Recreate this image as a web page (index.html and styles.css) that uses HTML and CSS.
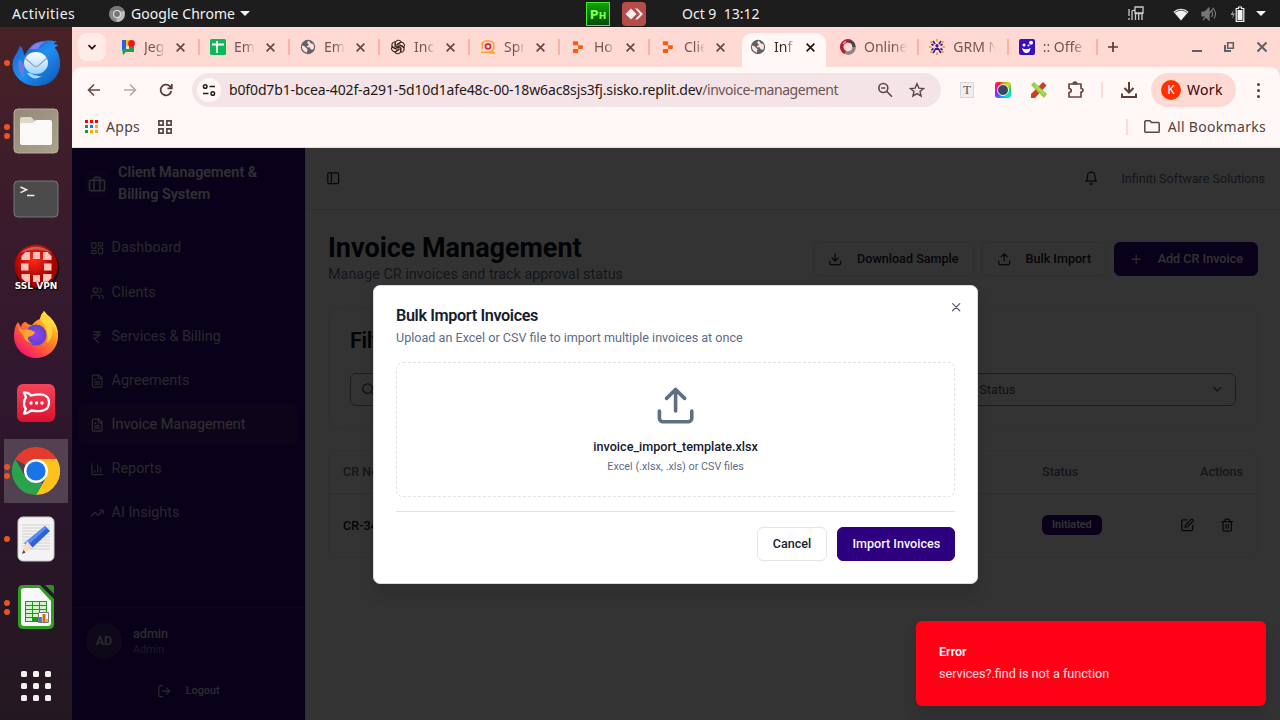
FILE: index.html
```html
<!DOCTYPE html>
<html lang="en">
<head>
<meta charset="utf-8">
<title>Invoice Management</title>
<link rel="stylesheet" href="styles.css">
</head>
<body>
<svg class="defs" width="0" height="0" aria-hidden="true">
  <defs>
    <linearGradient id="g-bird" x1="0" y1="0" x2="1" y2="1"><stop offset="0" stop-color="#1b5fd0"/><stop offset=".5" stop-color="#1f8ff0"/><stop offset="1" stop-color="#0d4fae"/></linearGradient>
    <linearGradient id="g-mail" x1="0" y1="0" x2="0" y2="1"><stop offset="0" stop-color="#fff"/><stop offset="1" stop-color="#9bd3ff"/></linearGradient>
    <linearGradient id="g-fox" x1="1" y1="0" x2=".2" y2="1"><stop offset="0" stop-color="#fff04a"/><stop offset=".4" stop-color="#ff9a1f"/><stop offset=".75" stop-color="#ff4248"/><stop offset="1" stop-color="#e8107a"/></linearGradient>
    <radialGradient id="g-fox2"><stop offset="0" stop-color="#9a3cff"/><stop offset="1" stop-color="#5b46c4"/></radialGradient>
    <radialGradient id="g-vpn" cx=".45" cy=".35"><stop offset="0" stop-color="#ff2a1a"/><stop offset="1" stop-color="#a30000"/></radialGradient>
    <linearGradient id="g-rc" x1="0" y1="0" x2="0" y2="1"><stop offset="0" stop-color="#f5445a"/><stop offset="1" stop-color="#d9122e"/></linearGradient>
    <linearGradient id="g-files" x1="0" y1="0" x2="1" y2="1"><stop offset="0" stop-color="#938a76"/><stop offset="1" stop-color="#aaa28e"/></linearGradient>
  </defs>
  <symbol id="x" viewBox="0 0 10 10"><path d="M1.500 1.500l7 7m0-7l-7 7" stroke="currentColor" stroke-width="1.500" fill="none"/></symbol>
  <symbol id="globe" viewBox="0 0 16 16"><circle cx="8" cy="8" r="7.200" fill="#5f6368"/><path d="M8.600 1.800C7.300 3 6.900 3.400 7.700 4.400 8.500 5.100 9 5 8.600 6.200 8 7.200 6.500 6.700 6.800 8.200h2.400c1.300.3 1 1.300 1.300 2 .8.4 1.900-.1 2.700.5A6 6 0 0 0 13 4.700c-1 .3-2 .2-2.600-.6-.7-.8-.2-1.300-1.800-2.300zM2 6.800c1.500-.2 2.800.4 3.600 1.600.6 1 1.800.9 1.900 2 .1 1-.9 1.600-.5 3.300A6 6 0 0 1 2 6.800z" fill="#ffe3df"/></symbol>
  <symbol id="replit" viewBox="0 0 16 16"><path d="M3.800 2.200h3.400a.9.9 0 0 1 .9.9v3.200H3.800a.9.9 0 0 1-.9-.9V3.100a.9.900 0 0 1 .9-.9zM8.100 6.300h3.900a.9.9 0 0 1 .9.9v1.800a.9.9 0 0 1-.9.9H8.100zM3.800 9.900h4.300v3.200a.9.9 0 0 1-.9.9H3.800a.9.9 0 0 1-.9-.9v-2.300a.9.9 0 0 1 .9-.9z" fill="#ff5a0a"/></symbol>
  <symbol id="file" viewBox="0 0 24 24"><path d="M15 2H6a2 2 0 0 0-2 2v16a2 2 0 0 0 2 2h12a2 2 0 0 0 2-2V7zM14 2v4a2 2 0 0 0 2 2h4M10 9H8m8 4H8m8 4H8"/></symbol>
  <symbol id="upload" viewBox="0 0 24 24"><path d="M21 15v4a2 2 0 0 1-2 2H5a2 2 0 0 1-2-2v-4M17 8l-5-5-5 5M12 3v12"/></symbol>
</svg>

<div class="desktop">
  <header class="topbar">
    <span class="activities">Activities</span>
    <svg class="tb-chrome" viewBox="0 0 16 16"><circle cx="8" cy="8" r="8" fill="#888"/><path d="M8 8L1.500 3.800A8 8 0 0 1 15 4.500H8z" fill="#777"/><path d="M8 8l7-3.500A8 8 0 0 1 7.500 16z" fill="#bbb"/><circle cx="8" cy="8" r="4" fill="#e0e0e0"/><circle cx="8" cy="8" r="2.900" fill="#777"/></svg>
    <span class="appname">Google Chrome</span>
    <i class="caret"></i>
    <span class="ph">P<small>H</small></span>
    <svg class="anydesk" viewBox="0 0 24 24"><rect width="24" height="24" rx="4" fill="#b44d49"/><path d="M9 6.500l5.500 5.500L9 17.500 3.500 12zM13 6.500h2.500L21 12l-5.500 5.500H13L18 12z" fill="#eee"/></svg>
    <span class="clock">Oct 9&nbsp; 13:12</span>
    <svg class="net" viewBox="0 0 18 16" fill="none" stroke="#cfcbc5" stroke-width="1.300"><path d="M2 3v7m0 2v2M5 14V5.500Q5 4 7.500 4.500M8 1h8v6H8zM8.500 14V7.500H16M11.700 8v6m3.300-6v6"/></svg>
    <svg class="wifi" viewBox="0 0 16 14"><path d="M8 13.500L.5 4.800a11 11 0 0 1 15 0z" fill="#f2f2f2"/><path d="M2 5.500Q8 .8 14 5.500" fill="none" stroke="#1d1d1d" stroke-width=".7"/></svg>
    <svg class="sound" viewBox="0 0 16 14" fill="none" stroke="#777" stroke-width="1.200"><path d="M1 5h3l4-4v12L4 9H1z" fill="#777"/><path d="M2 13L13 1M10.500 4q2 3 0 6M13 2.500q3 4.500 0 9"/></svg>
    <svg class="battery" viewBox="0 0 15 16"><path d="M3.500 4L.5 9H3l-1 4L5 7.500H2.800z" fill="#999"/><path d="M8.500 1h3v1.500h2.300v12.800H6.200V2.500h2.300z" fill="none" stroke="#f2f2f2" stroke-width="1.200"/><path d="M7.500 4h5v10h-5z" fill="#f2f2f2"/></svg>
    <i class="caret"></i>
  </header>

  <div class="screen">
    <nav class="dock">
      <div class="app one"><svg viewBox="0 0 48 48"><path d="M1 22C2 17 5 15 8 7c2 1 4 5 4 10C16 12 18 5 27 3c7-2 14-2 18 0-2 0-3 1-3 2 3 0 4 1 4 2-2 0-3 1-3 2 3 3 5 9 5 16 0 13-10 22-24 22S-2 35 1 22z" fill="url(#g-bird)"/><path d="M17 14C17 4 28 1 38 3c-6 1-7 5-11 6z" fill="#2274dc"/><path d="M18 10q5-8 15-7-5 2-7 7z" fill="#8a7bea"/><path d="M7 20q-3 11 5 19-1-7 1-13z" fill="#6d78dc"/><ellipse cx="24" cy="24" rx="12" ry="11" fill="url(#g-mail)"/><path d="M13 19l9 8q2 1 4 0l9-8" fill="none" stroke="#93a8ba" stroke-width="1.300"/><path d="M18 34q6 4 12 3-9 6-15-3z" fill="#a9d7ff"/></svg></div>
      <div class="app two"><svg viewBox="0 0 48 48"><rect x="2" y="2" width="44" height="44" rx="4" fill="url(#g-files)" stroke="#b7b09d"/><path d="M8 12q0-2 2-2h9l4 4h14v8H8z" fill="#ddd8c8"/><path d="M8 17q0-1 2-1h11l3-3h14q2 0 2 2v21q0 2-2 2H10q-2 0-2-2z" fill="#faf9f7"/></svg></div>
      <div class="app"><svg viewBox="0 0 48 48"><rect x="2" y="6" width="44" height="36" rx="4" fill="#4b4b4b" stroke="#777"/><path d="M8.500 12l6 2.800-6 2.800M15 20.500h7.500" fill="none" stroke="#eee" stroke-width="1.600"/></svg></div>
      <div class="app vpn"><svg viewBox="0 0 48 48"><circle cx="25" cy="25" r="22" fill="#180408"/><circle cx="24" cy="23" r="21.500" fill="url(#g-vpn)"/><path d="M8 10Q24-3 40 10 24 3 8 10z" fill="#c65b58"/><path d="M9.500 17v-4l4-4h4.500v8zM21 9h7v7h-7zM31 9h4.500l4 4v4H31zM9 20.500h7.500v7H9zM32 20.500h7.500v7H32zM9.500 31H18v8h-4.500l-4-4zM21 32h7v7h-7zM31 31h8.500v4l-4 4H31z" fill="#ffc3bb"/></svg><b>SSL VPN</b></div>
      <div class="app fox"><svg viewBox="0 0 48 48"><path d="M6 12l3 5q1-5 5-5 2 3 6 3 4-5 8-6 1-5 4-8 3 4 6 6 8 8 8 19c0 13-10 22-22 22S2 38 2 26q0-9 4-14z" fill="url(#g-fox)"/><circle cx="24" cy="25" r="10.500" fill="url(#g-fox2)"/><path d="M6 12q0 7 5 8 6-2 12 2-1 4-7 5-1 5 6 7-9-1-11-9-5-4-5-13z" fill="#ffa32c"/><path d="M28 9q1-5 4-8 3 4 6 6 8 8 8 19-1-7-6-10 2 12-5 17 3-13-7-24z" fill="#ffe243" opacity=".7"/></svg></div>
      <div class="app"><svg viewBox="0 0 48 48"><rect x="5" y="5" width="38" height="38" rx="6" fill="url(#g-rc)"/><path d="M12 13.500q5 0 7 3 18-4 18 7t-18 8q-3 3-7 3l2-5q-2-1-2-5t2-6z" fill="none" stroke="#fff" stroke-width="2.300" stroke-linejoin="round"/><g fill="#fff"><circle cx="19" cy="24" r="1.700"/><circle cx="24.500" cy="24" r="1.700"/><circle cx="30" cy="24" r="1.700"/></g></svg></div>
      <div class="app two current"><svg viewBox="0 0 48 48"><path d="M24 24L3.200 12A24 24 0 0 1 44.800 12z" fill="#e33b2e"/><path d="M24 12h20.800A24 24 0 0 1 24 48l10.400-18z" fill="#fcc31e"/><path d="M3.200 12l10.400 18q4 5 10.400 6h7L24 48A24 24 0 0 1 3.200 12z" fill="#2ba24c"/><circle cx="24" cy="24" r="12" fill="#fff"/><circle cx="24" cy="24" r="9.600" fill="#1a73e8"/></svg></div>
      <div class="app one"><svg viewBox="0 0 48 48"><rect x="6" y="2" width="36" height="44" rx="5" fill="#f3f3f3" stroke="#cacaca"/><path d="M10 10h28M10 13h28M10 16h28M10 19h28M10 22h28M10 25h28M10 28h28M10 31h28M10 34h28" stroke="#d0d0d0"/><path d="M33 11l5 5-19 18-6-6z" fill="#2e63d8"/><path d="M33 11l2 2-20 18-3-3z" fill="#5b8bf0"/><path d="M15 26l6 7-11 6z" fill="#fbdcc0"/><path d="M11.500 35l2 2.500L10 39z" fill="#444"/></svg></div>
      <div class="app two"><svg viewBox="0 0 48 48"><path d="M11 2h17l14 14v25q0 5-5 5H11q-5 0-5-5V7q0-5 5-5z" fill="#2f9e22"/><path d="M12 5h15l12 13v22q0 3-3 3H12q-3 0-3-3V8q0-3 3-3z" fill="#f8f8f8"/><path d="M33 2h7q2 0 2 2v7z" fill="#2c8f1e"/><path d="M13 18h22v21H13z" fill="#23951a"/><path d="M14 19h6v3h-6zm7 0h6v3h-6zm7 0h6v3h-6zM14 23h6v3h-6zm7 0h6v3h-6zm7 0h6v3h-6zM14 27h6v3h-6zm7 0h6v3h-6zm7 0h6v3h-6zM14 31h6v3h-6zm7 0h6v3h-6zM14 35h6v3h-6z" fill="#d2f3cb"/><path d="M26.500 29.500h10v10h-10z" fill="#fff" stroke="#777"/><path d="M27 34h3v5h-3z" fill="#2a90c8"/><path d="M30.500 31h3v8h-3z" fill="#dc6414"/><path d="M34 36h2v3h-2z" fill="#f0b020"/></svg></div>
      <div class="launcher"><i></i><i></i><i></i><i></i><i></i><i></i><i></i><i></i><i></i></div>
    </nav>

    <main class="browser">
      <div class="tabs">
        <span class="tabsearch"><svg viewBox="0 0 10 10"><path d="M1.500 3.200L5 6.700l3.500-3.500" fill="none" stroke="#2b1512" stroke-width="1.700"/></svg></span>
        <div class="tab"><svg class="fav" viewBox="0 0 16 16"><path d="M2 1h4v10H2z" fill="#2164e8"/><path d="M6 1h3v6H6z" fill="#fbbc04"/><path d="M2 10h12v3H6l-3 3z" fill="#14a750"/><path d="M9 6h5v5H9z" fill="#14a750"/><circle cx="11.500" cy="4.500" r="3.400" fill="#f01414"/></svg><span class="t">Jeg</span><svg class="cl"><use href="#x"/></svg></div>
        <div class="tab"><svg class="fav" viewBox="0 0 16 16"><rect width="16" height="16" rx="1.500" fill="#0cb858"/><path d="M2 5.500h12M7 2v12" stroke="#fff" stroke-width="1.800"/></svg><span class="t">Em</span><svg class="cl"><use href="#x"/></svg></div>
        <div class="tab"><svg class="fav"><use href="#globe"/></svg><span class="t">Em</span><svg class="cl"><use href="#x"/></svg></div>
        <div class="tab"><svg class="fav" viewBox="0 0 16 16" fill="none" stroke="#3a2422" stroke-width="1.100"><g id="petal"><path d="M5.200 8.200V4.300a3.200 3.200 0 0 1 6-1.400L8 4.800v3.600"/></g><use href="#petal" transform="rotate(60 8 8)"/><use href="#petal" transform="rotate(120 8 8)"/><use href="#petal" transform="rotate(180 8 8)"/><use href="#petal" transform="rotate(240 8 8)"/><use href="#petal" transform="rotate(300 8 8)"/></svg><span class="t">Inc</span><svg class="cl"><use href="#x"/></svg></div>
        <div class="tab"><svg class="fav" viewBox="0 0 16 16" fill="none"><path d="M1.500 6q1-4 6-4.300 6.500 0 6.500 5.500t-6 6H1M2.500 10q-1-3 1-5M11 12.500l4 1.500H9" stroke="#f8a62e" stroke-width="1.600"/><circle cx="8" cy="7.300" r="2.500" fill="#fff" stroke="#e02440" stroke-width="1.800"/></svg><span class="t">Spr</span><svg class="cl"><use href="#x"/></svg></div>
        <div class="tab"><svg class="fav"><use href="#replit"/></svg><span class="t">Ho</span><svg class="cl"><use href="#x"/></svg></div>
        <div class="tab last"><svg class="fav"><use href="#replit"/></svg><span class="t">Clie</span><svg class="cl"><use href="#x"/></svg></div>
        <div class="tab active"><svg class="fav"><use href="#globe"/></svg><span class="t">Inf</span><svg class="cl"><use href="#x"/></svg></div>
        <div class="tab wide"><svg class="fav" viewBox="0 0 16 16" fill="none" stroke-width="3.500"><path d="M10 2.300A6 6 0 0 0 5.500 13.500" stroke="#b0203a"/><path d="M5.500 13.500A6 6 0 0 0 14 7.500" stroke="#888"/><path d="M14 8A6 6 0 0 0 9 2" stroke="#4b4648"/><path d="M3 5q1-2 3-2.500" stroke="#ef8f9a" stroke-width="1.500"/></svg><span class="t">Online</span></div>
        <div class="tab wide"><svg class="fav" viewBox="0 0 16 16"><path d="M4 2l2 3M12 2l-2 3M4 14l2-3M12 14l-2-3M2.500 5l2 1.500M13.500 5l-2 1.500M2.500 11l2-1.500M13.500 11l-2-1.500" stroke="#3a1d8c" stroke-width="1.600"/><path d="M8 0v2.500M8 13.500V16M0 8h2.500M13.500 8H16M1.500 2.500l1.500 1M14.500 2.500l-1.500 1M1.500 13.500l1.500-1M14.500 13.500l-1.500-1" stroke="#f6941e" stroke-width="1.600"/><circle cx="8" cy="6.700" r="1.600" fill="#3a1d8c"/><path d="M5.300 11q0-2.500 2.700-2.500t2.700 2.500z" fill="#3a1d8c"/></svg><span class="t">GRM N</span></div>
        <div class="tab wide"><svg class="fav" viewBox="0 0 16 16"><rect width="16" height="16" rx="2" fill="#3a0fc0"/><circle cx="5" cy="6" r="1.500" fill="#fff"/><circle cx="12" cy="3.700" r="2" fill="#fff"/><circle cx="9.500" cy="6.500" r="1" fill="#fff"/><path d="M3 9q4 2.500 8.500 0-.5 5-4 5T3 9z" fill="#fff"/></svg><span class="t">:: Offe</span></div>
        <svg class="plus" viewBox="0 0 12 12"><path d="M6 1v10M1 6h10" stroke="#5a3733" stroke-width="1.700"/></svg>
        <span class="winctl">
          <svg viewBox="0 0 12 12"><path d="M1 10h10" stroke="#5d6166" stroke-width="2"/></svg>
          <svg viewBox="0 0 12 12" fill="none" stroke="#5d6166"><path d="M4.700 1.700h5.600v5.600H4.700z" stroke-width="1.600"/><path d="M2 4v6h6" stroke-width="2"/></svg>
          <svg viewBox="0 0 12 12"><path d="M1.500 1.500l9 9m0-9l-9 9" stroke="#5d6166" stroke-width="2"/></svg>
        </span>
      </div>

      <div class="toolbar">
        <span class="slot"><svg class="i16" viewBox="0 0 16 16" fill="none" stroke="#6b4540" stroke-width="1.600"><path d="M14 8H3M8 2.500L2.500 8 8 13.500"/></svg></span>
        <span class="slot"><svg class="i16" viewBox="0 0 16 16" fill="none" stroke="#baa6a3" stroke-width="1.600"><path d="M2 8h11M8 2.500L13.500 8 8 13.500"/></svg></span>
        <span class="slot"><svg class="i16" viewBox="0 0 16 16" fill="none" stroke="#5e3c38" stroke-width="1.800"><path d="M13.300 9a5.400 5.400 0 1 1-1.500-4.900L13.500 6M13.800 2v4.300H9.500"/></svg></span>
        <div class="omnibox">
          <span class="site"><svg class="i16" viewBox="0 0 16 16" fill="none" stroke="#2b1a18" stroke-width="1.500"><circle cx="4.200" cy="4.500" r="1.800"/><path d="M8.500 4.500H14M2 11.500h5.500"/><circle cx="11.800" cy="11.500" r="1.800"/></svg></span>
          <span class="url">b0f0d7b1-bcea-402f-a291-5d10d1afe48c-00-18w6ac8sjs3fj.sisko.replit.dev<em>/invoice-management</em></span>
          <svg class="i16 lens" viewBox="0 0 16 16" fill="none" stroke="#574643" stroke-width="1.600"><circle cx="6.300" cy="6" r="4.500"/><path d="M4.300 6h4M9.600 9.300L15 14.700"/></svg>
          <svg class="i16 star" viewBox="0 0 16 16" fill="none" stroke="#574643" stroke-width="1.400"><path d="M8 1.800l1.900 4.300 4.600.4-3.500 3 1.100 4.500L8 11.600 3.900 14l1.100-4.500-3.500-3 4.600-.4z"/></svg>
        </div>
        <span class="slot"><span class="ext-t">T</span></span>
        <span class="slot"><span class="ext-c"><i></i></span></span>
        <span class="slot"><svg class="i16" viewBox="0 0 16 16"><path d="M12 0l3.500 3.500L4 16H0v-4z" fill="#d33c22"/><path d="M3 0l13 12-3 4L0 3z" fill="#94cf46"/><path d="M4 3.500l9 8.500" stroke="#c8f07c"/></svg></span>
        <span class="slot"><svg class="i18" viewBox="0 0 18 18" fill="none" stroke="#6b4540" stroke-width="1.700" stroke-linejoin="round"><path d="M3 3h12v4.500q2 .2 2 1.800t-2 1.800V16H3v-4.500q2.300-.3 2.300-2T3 7.500z"/><path d="M7.300 2.700q0-1.700 1.700-1.700t1.700 1.700z" fill="#6b4540"/></svg></span>
        <span class="vsep"></span>
        <span class="slot"><svg class="i18" viewBox="0 0 18 18" fill="none" stroke="#5e3c38" stroke-width="2"><path d="M9 1v10M4.500 7L9 11.500 13.500 7M2 12.500V16h14v-3.500"/></svg></span>
        <span class="profile"><b>K</b>Work</span>
        <span class="slot dots"><i></i><i></i><i></i></span>
      </div>

      <div class="bookmarks">
        <span class="gapps"><i class="r"></i><i class="r"></i><i class="r"></i><i class="g"></i><i class="b"></i><i class="y"></i><i class="g"></i><i class="y"></i><i class="y"></i></span>
        <span class="bmtext">Apps</span>
        <svg class="grid4" viewBox="0 0 14 14" fill="none" stroke="#574643" stroke-width="1.700"><path d="M.9.9h4.200v4.200H.9zM8.900.9h4.200v4.200H8.900zM.9 8.900h4.200v4.200H.9zM8.900 8.900h4.200v4.200H8.900z"/></svg>
        <span class="vsep bm"></span>
        <svg class="folder" viewBox="0 0 16 13" fill="none" stroke="#574643" stroke-width="1.500"><path d="M2 .8h4L7.500 2.500h6.800q.9 0 .9.900v8q0 .8-.9.800H1.700q-.9 0-.9-.8V1.700q0-.9 1.200-.9z"/></svg>
        <span class="bmtext">All Bookmarks</span>
      </div>

      <div class="page">
        <aside class="sidebar">
          <div class="brand">
            <span class="brandicon"><svg class="lu i18" viewBox="0 0 24 24"><path d="M8 7V5a2 2 0 0 1 2-2h4a2 2 0 0 1 2 2v2M4 7h16a2 2 0 0 1 2 2v10a2 2 0 0 1-2 2H4a2 2 0 0 1-2-2V9a2 2 0 0 1 2-2zM8 7v14M16 7v14"/></svg></span>
            <h2>Client Management &amp; Billing System</h2>
          </div>
          <div class="menu">
            <a class="first"><svg class="lu" viewBox="0 0 24 24"><rect width="7" height="9" x="3" y="3" rx="1"/><rect width="7" height="5" x="14" y="3" rx="1"/><rect width="7" height="9" x="14" y="12" rx="1"/><rect width="7" height="5" x="3" y="16" rx="1"/></svg>Dashboard</a>
            <a><svg class="lu" viewBox="0 0 24 24"><path d="M16 21v-2a4 4 0 0 0-4-4H6a4 4 0 0 0-4 4v2"/><circle cx="9" cy="7" r="4"/><path d="M22 21v-2a4 4 0 0 0-3-3.870M16 3.130a4 4 0 0 1 0 7.750"/></svg>Clients</a>
            <a><svg class="lu" viewBox="0 0 24 24"><path d="M6 3h12M6 8h12M6 13l8.500 8M6 13h3c6.667 0 6.667-10 0-10"/></svg>Services &amp; Billing</a>
            <a><svg class="lu"><use href="#file"/></svg>Agreements</a>
            <a class="on"><svg class="lu"><use href="#file"/></svg>Invoice Management</a>
            <a><svg class="lu" viewBox="0 0 24 24"><path d="M3 3v16a2 2 0 0 0 2 2h16M18 17V9M13 17V5M8 17v-3"/></svg>Reports</a>
            <a><svg class="lu" viewBox="0 0 24 24"><path d="M22 7l-8.500 8.500-5-5L2 17M16 7h6v6"/></svg>AI Insights</a>
          </div>
          <div class="user">
            <div class="who"><span class="avatar">AD</span><div><b>admin</b><small>Admin</small></div></div>
            <div class="logout"><svg class="lu" viewBox="0 0 24 24"><path d="M9 21H5a2 2 0 0 1-2-2V5a2 2 0 0 1 2-2h4M16 17l5-5-5-5M21 12H9"/></svg>Logout</div>
          </div>
        </aside>

        <section class="content">
          <div class="apphead">
            <svg class="lu" viewBox="0 0 24 24"><rect width="18" height="18" x="3" y="3" rx="2"/><path d="M9 3v18"/></svg>
            <svg class="lu bell" viewBox="0 0 24 24"><path d="M6 8a6 6 0 0 1 12 0c0 7 3 9 3 9H3s3-2 3-9M10.300 21a1.940 1.940 0 0 0 3.400 0"/></svg>
            <span>Infiniti Software Solutions</span>
          </div>
          <div class="body">
            <div class="titlerow">
              <div class="titles"><h1>Invoice Management</h1><p>Manage CR invoices and track approval status</p></div>
              <div class="btns">
                <span class="btn"><svg class="lu" viewBox="0 0 24 24"><path d="M21 15v4a2 2 0 0 1-2 2H5a2 2 0 0 1-2-2v-4M7 10l5 5 5-5M12 15V3"/></svg>Download Sample</span>
                <span class="btn"><svg class="lu"><use href="#upload"/></svg>Bulk Import</span>
                <span class="btn primary"><svg class="lu" viewBox="0 0 24 24"><path d="M5 12h14M12 5v14"/></svg>Add CR Invoice</span>
              </div>
            </div>
            <div class="card filters">
              <h3>Filters</h3>
              <div class="fields">
                <div class="field"><svg class="lu" viewBox="0 0 24 24"><circle cx="11" cy="11" r="8"/><path d="M21 21l-4.300-4.300"/></svg></div>
                <div class="field select"><span>All Status</span><svg class="lu" viewBox="0 0 24 24"><path d="M6 9l6 6 6-6"/></svg></div>
              </div>
            </div>
            <div class="card table">
              <div class="tr th"><span>CR No.</span><span>Date</span><span>Status</span><span class="act">Actions</span></div>
              <div class="tr"><b>CR-344</b><span>Oct 9, 2025</span><span><em class="badge">Initiated</em></span>
                <span class="act icons"><svg class="lu" viewBox="0 0 24 24"><path d="M12 3H5a2 2 0 0 0-2 2v14a2 2 0 0 0 2 2h14a2 2 0 0 0 2-2v-7"/><path d="M18.400 2.600a2.100 2.100 0 0 1 3 3l-9 9-4 1 1-4z"/></svg><svg class="lu" viewBox="0 0 24 24"><path d="M3 6h18M19 6v14a2 2 0 0 1-2 2H7a2 2 0 0 1-2-2V6M8 6V4a2 2 0 0 1 2-2h4a2 2 0 0 1 2 2v2M10 11v6M14 11v6"/></svg></span></div>
            </div>
          </div>
        </section>

        <div class="overlay"></div>

        <div class="dialog">
          <svg class="lu close" viewBox="0 0 24 24"><path d="M18 6L6 18M6 6l12 12"/></svg>
          <h2>Bulk Import Invoices</h2>
          <p>Upload an Excel or CSV file to import multiple invoices at once</p>
          <div class="drop">
            <svg class="lu"><use href="#upload"/></svg>
            <b>invoice_import_template.xlsx</b>
            <small>Excel (.xlsx, .xls) or CSV files</small>
          </div>
          <div class="foot"><span class="btn">Cancel</span><span class="btn primary">Import Invoices</span></div>
        </div>

        <div class="toast"><b>Error</b><span>services?.find is not a function</span></div>
      </div>
    </main>
  </div>
</div>
</body>
</html>
```

FILE: styles.css
```css
* { box-sizing: border-box; }
body { margin: 0; width: 1280px; height: 720px; overflow: hidden; font-family: Roboto, sans-serif; }
h1, h2, h3, p { margin: 0; }
svg { display: block; flex: none; }
.defs { position: absolute; }
.desktop { width: 1280px; height: 720px; display: flex; flex-direction: column; }
.i16 { width: 16px; height: 16px; }
.i18 { width: 18px; height: 18px; }

/* system bar */
.topbar { height: 27px; flex: none; background: #1d1d1d; color: #f2f2f2; display: flex; align-items: center; padding-left: 12px; font: 14px/27px "Noto Sans", sans-serif; white-space: nowrap; }
.activities { width: 97px; letter-spacing: .5px; }
.tb-chrome { width: 16px; height: 16px; margin-right: 6px; }
.appname { width: 109px; letter-spacing: .05px; }
.caret { border: 5px solid transparent; border-top-color: #f2f2f2; border-bottom: 0; }
.ph { margin-left: 336px; width: 24px; height: 24px; border: 1px solid #3ef024; background: linear-gradient(#14a010, #064a04); color: #7dff4c; font: bold 12px/24px "DejaVu Sans", sans-serif; text-align: center; }
.ph small { font-size: 9px; }
.anydesk { width: 24px; height: 24px; margin-left: 12px; }
.clock { margin-left: 36px; width: 445px; }
.net { width: 18px; height: 16px; margin-right: 28px; }
.wifi { width: 16px; height: 14px; margin-right: 12px; }
.sound { width: 16px; height: 14px; margin-right: 13px; }
.battery { width: 15px; height: 16px; margin-right: 11px; }

.screen { flex: 1; display: flex; min-height: 0; }

/* dock */
.dock { width: 72px; flex: none; padding-top: 2px; background: linear-gradient(#482226, #3d1c2b 22%, #32182e 48%, #2a152a 70%, #241820); }
.app { position: relative; height: 68px; display: flex; align-items: center; justify-content: center; }
.app > svg { width: 48px; height: 48px; }
.fox { padding-bottom: 3px; }
.app.one::before, .app.two::before { content: ""; position: absolute; left: 4px; top: 31px; width: 6px; height: 6px; border-radius: 50%; background: #e95420; }
.app.two::before { top: 27px; box-shadow: 0 9px 0 #e95420; }
.current { background: linear-gradient(#514151, #514151) center / 64px 64px no-repeat; }
.vpn b { position: absolute; left: 0; right: 0; top: 48px; text-align: center; color: #fff; font: bold 9px/10px "DejaVu Sans", sans-serif; text-shadow: 0 0 2px #000, 1px 1px 1px #000; }
.launcher { width: 30px; margin: 30px auto 0 21px; display: grid; grid-template-columns: repeat(3, 6px); gap: 6px; }
.launcher i { width: 6px; height: 6px; border-radius: 1.500px; background: #f2f0ee; }

/* browser chrome */
.browser { flex: 1; min-width: 0; display: flex; flex-direction: column; background: #ffd9d3; font-family: "Noto Sans", sans-serif; font-size: 14px; color: #534341; }
.tabs { height: 40px; flex: none; display: flex; align-items: center; padding-left: 6px; }
.tabsearch { width: 28px; height: 28px; border-radius: 9px; background: #ffece9; margin-right: 4px; display: flex; align-items: center; justify-content: center; }
.tabsearch svg { width: 10px; height: 10px; }
.tab { position: relative; width: 90px; height: 40px; flex: none; display: flex; align-items: center; padding-left: 10px; color: #7a5550; }
.tab::after { content: ""; position: absolute; right: 0; top: 12px; width: 2px; height: 16px; background: #ffb0a5; }
.tab.last::after, .tab.active::after { display: none; }
.fav { width: 16px; height: 16px; margin-right: 8px; }
.t { width: 21px; overflow: hidden; white-space: nowrap; line-height: 20px; margin-top: -1px; -webkit-mask: linear-gradient(90deg, #000 55%, transparent); }
.cl { width: 11px; height: 11px; margin-left: 9.500px; color: #6b4540; }
.tab.active { color: #3a2825; }
.tab.active::before { content: ""; position: absolute; z-index: 0; left: 2px; top: 6px; width: 84px; height: 34px; border-radius: 10px 10px 0 0; background: #fff8f6; }
.tab.active > * { position: relative; }
.tab.active .cl { color: #241210; }
.tab.wide { width: 89.330px; }
.wide .t { width: 43px; -webkit-mask: linear-gradient(90deg, #000 70%, transparent); }
.plus { width: 12px; height: 12px; margin-left: 9px; }
.winctl { display: flex; gap: 20.500px; margin-left: 72px; }
.winctl svg { width: 12px; height: 12px; }
.toolbar { height: 46px; flex: none; display: flex; align-items: center; padding-left: 4px; background: #fff8f6; border-radius: 10px 10px 0 0; }
.slot { width: 36px; flex: none; display: flex; align-items: center; justify-content: center; }
.omnibox { width: 749px; height: 34px; margin: 0 8px; border-radius: 17px; background: #f4e4e7; display: flex; align-items: center; padding-left: 5px; }
.site { width: 24px; height: 24px; border-radius: 50%; background: #fff8f6; display: flex; align-items: center; justify-content: center; }
.url { margin: -2px 0 0 8px; width: 648px; white-space: nowrap; color: #231918; font-size: 14px; letter-spacing: -.14px; }
.url em { font-style: normal; color: #6d5552; letter-spacing: -.45px; }
.star { margin-left: 16px; }
.ext-t { width: 14px; height: 16px; background: #efefef; border: 1px solid #d8d8d8; color: #555; font: 13px/14px "Liberation Serif", serif; text-align: center; }
.ext-c { width: 16px; height: 16px; border-radius: 3px; background: conic-gradient(#f28c00, #c8e020 12%, #18d070 25%, #00e8d0 38%, #00b8ff 50%, #8030ff 65%, #ff00b0 80%, #ff2020 92%, #f28c00); display: flex; align-items: center; justify-content: center; }
.ext-c i { width: 12px; height: 12px; border-radius: 50%; background: #34495e; border: 1.500px solid #fff; }
.vsep { width: 2px; height: 16px; margin: 0 8px; background: #ffd9d3; }
.profile { width: 85px; height: 34px; margin: 0 4px; border-radius: 17px; background: #ffd9d3; color: #410002; display: flex; align-items: center; padding-left: 10px; gap: 6px; letter-spacing: .3px; line-height: 32px; }
.profile b { width: 20px; height: 20px; border-radius: 50%; background: #ff3100; color: #fff; font: 12px/20px "Noto Sans", sans-serif; text-align: center; }
.dots { flex-direction: column; gap: 3px; }
.dots i { width: 3px; height: 3px; border-radius: 50%; background: #5e3c38; }
.bookmarks { height: 35px; flex: none; display: flex; align-items: center; padding: 0 14px 7px 13px; background: #fff8f6; border-bottom: 1px solid #f3dcd8; white-space: nowrap; }
.bmtext { letter-spacing: .3px; }
.gapps { display: grid; grid-template-columns: repeat(3, 3px); gap: 2px; margin-right: 8px; }
.gapps i { width: 3px; height: 3px; }
.r { background: #f00; } .g { background: #00a050; } .b { background: #1a73e8; } .y { background: #fa0; }
.grid4 { width: 14px; height: 14px; margin-left: 17.500px; }
.vsep.bm { margin: 0 16px 0 auto; }
.folder { width: 16px; height: 13px; margin-right: 8px; }

/* app */
.page { position: relative; flex: 1; min-height: 0; display: flex; background: #fff; font-family: Roboto, sans-serif; font-size: 12.600px; color: #1a2333; overflow: hidden; }
.lu { width: 14.400px; height: 14.400px; fill: none; stroke: currentColor; stroke-width: 2; stroke-linecap: round; stroke-linejoin: round; }
.sidebar { width: 233px; flex: none; background: #2d0080; color: #dcdce0; display: flex; flex-direction: column; }
.brand { height: 73px; display: flex; align-items: flex-start; padding: 14px 14px 0; border-bottom: 1px solid #36108a; }
.brandicon { width: 21px; height: 28px; margin: 8px 11px 0 0; border-radius: 7px; background: #3d1484; display: flex; align-items: center; justify-content: center; }
.brandicon .lu { width: 18px; height: 18px; position: relative; left: .5px; top: -.5px; }
.brand h2 { font-size: 14.400px; line-height: 22px; font-weight: 600; color: #efefef; width: 150px; }
.menu { padding: 7px; flex: 1; display: flex; flex-direction: column; gap: 4.100px; }
.menu a { height: 40px; border-radius: 6px; padding-left: 11px; display: flex; align-items: center; gap: 7.200px; font-size: 14.400px; color: #c9c8d0; }
.menu a.first { padding-bottom: 1px; }
.menu a svg { position: relative; top: 1px; left: -.3px; }
.menu .on { background: #431681; color: #e8e8e8; }
.user { height: 113px; border-top: 1px solid #45168c; padding: 15px 14px; }
.who { display: flex; align-items: center; gap: 11px; }
.avatar { width: 36px; height: 36px; border-radius: 50%; background: #4c2884; font-weight: 500; display: flex; align-items: center; justify-content: center; padding-bottom: 1px; }
.who b { display: block; font-size: 12.600px; line-height: 18px; font-weight: 500; color: #ddd; }
.who small { display: block; font-size: 10.800px; line-height: 14px; color: #9488b2; }
.logout { height: 29px; margin-top: 17px; border: 1px solid #33088a; border-radius: 6px; display: flex; align-items: center; justify-content: center; gap: 14px; font-size: 10.800px; font-weight: 500; }
.logout svg { position: relative; top: 1px; }
.content { flex: 1; min-width: 0; border-left: 1px solid #f0f0f3; }
.apphead { height: 62px; border-bottom: 1px solid #dfe0e5; display: flex; align-items: center; padding: 0 15px 0 20px; }
.apphead .bell { margin-left: auto; margin-right: 23.500px; }
.apphead span { color: #64708a; }
.body { padding: 22px 22px 0; }
.titlerow { height: 53px; display: flex; justify-content: space-between; }
h1 { font-size: 27px; line-height: 32px; font-weight: 700; letter-spacing: -.03px; color: #0a1020; }
.titles p { margin-top: 1px; font-size: 14.400px; line-height: 20px; color: #64708a; }
.btns { display: flex; gap: 7.400px; align-items: flex-start; padding-top: 10px; }
.btn { height: 34px; border: 1px solid #e4e5ea; border-radius: 6px; padding: 0 14.400px 1px; display: flex; align-items: center; gap: 14.400px; font-weight: 500; white-space: nowrap; }
.btn svg { position: relative; top: .5px; }
.primary { background: #2d0080; border-color: #2d0080; color: #f6f4fb; padding: 0 14px 1px; }
.card { border: 1px solid #edeef2; border-radius: 11px; }
.filters { margin-top: 22px; height: 122px; padding: 21px; }
.filters h3 { font-size: 21.600px; line-height: 24px; font-weight: 600; letter-spacing: -.4px; color: #0a1020; }
.fields { display: grid; grid-template-columns: 1fr 1fr; gap: 14px; margin-top: 20px; }
.field { height: 33px; border: 1px solid #8c8f99; border-radius: 6px; display: flex; align-items: center; padding: 0 11px 1px 10px; color: #4a5060; }
.select { justify-content: space-between; padding-left: 161px; }
.table { margin-top: 21px; height: 108px; }
.tr { display: grid; grid-template-columns: 554px 145px 100px 1fr; height: 62px; padding: 0 14px; align-items: center; }
.th { height: 43px; padding-bottom: 2px; border-bottom: 1px solid #dfe0e5; font-weight: 500; color: #64708a; }
.act { text-align: right; }
.tr b { font-weight: 500; color: #10131c; }
.badge { display: inline-block; height: 20px; padding: 0 10px; border-radius: 6px; background: #2d0080; color: #f6f4fb; font: 600 10.800px/19px Roboto, sans-serif; }
.icons { display: flex; justify-content: flex-end; gap: 25px; padding-right: 9px; }
.overlay { position: absolute; inset: 0; background: rgba(0, 0, 0, .8); }

.dialog { position: absolute; left: 301.400px; top: 136.700px; width: 605px; height: 299px; padding: 21.900px 22.200px 21.600px 21.600px; background: #fff; border: 1px solid #d9dae3; border-radius: 7px; box-shadow: 0 9px 14px rgba(0, 0, 0, .12); }
.dialog h2 { font-size: 16.200px; line-height: 16px; font-weight: 600; letter-spacing: -.36px; color: #16202f; }
.dialog p { margin-top: 5px; font-size: 12.600px; line-height: 18px; color: #606d87; }
.close { position: absolute; right: 14.400px; top: 14px; color: #555c6b; }
.drop { height: 135px; margin-top: 15px; border: 1px dashed #dfe2e9; border-radius: 7px; display: flex; flex-direction: column; align-items: center; padding-top: 21px; color: #16202f; }
.drop .lu { width: 43.200px; height: 43.200px; color: #606d87; position: relative; left: .4px; }
.drop b { margin-top: 11px; line-height: 18px; font-weight: 500; }
.drop small { margin-top: 4px; font-size: 10.800px; line-height: 14px; color: #606d87; }
.foot { margin-top: 14px; padding-top: 15px; border-top: 1px solid #dfe2e9; display: flex; justify-content: flex-end; gap: 10.800px; }
.foot .btn { padding-bottom: 0; }
.toast { position: absolute; left: 844px; top: 473px; width: 350px; height: 85px; padding: 22px 23px; border-radius: 6px; background: #ff0014; color: #fff; display: flex; flex-direction: column; gap: 4px; line-height: 18px; box-shadow: 0 9px 14px rgba(0, 0, 0, .12); }
.toast b { font-weight: 600; }
.toast span { color: #ffe2e4; }
```
